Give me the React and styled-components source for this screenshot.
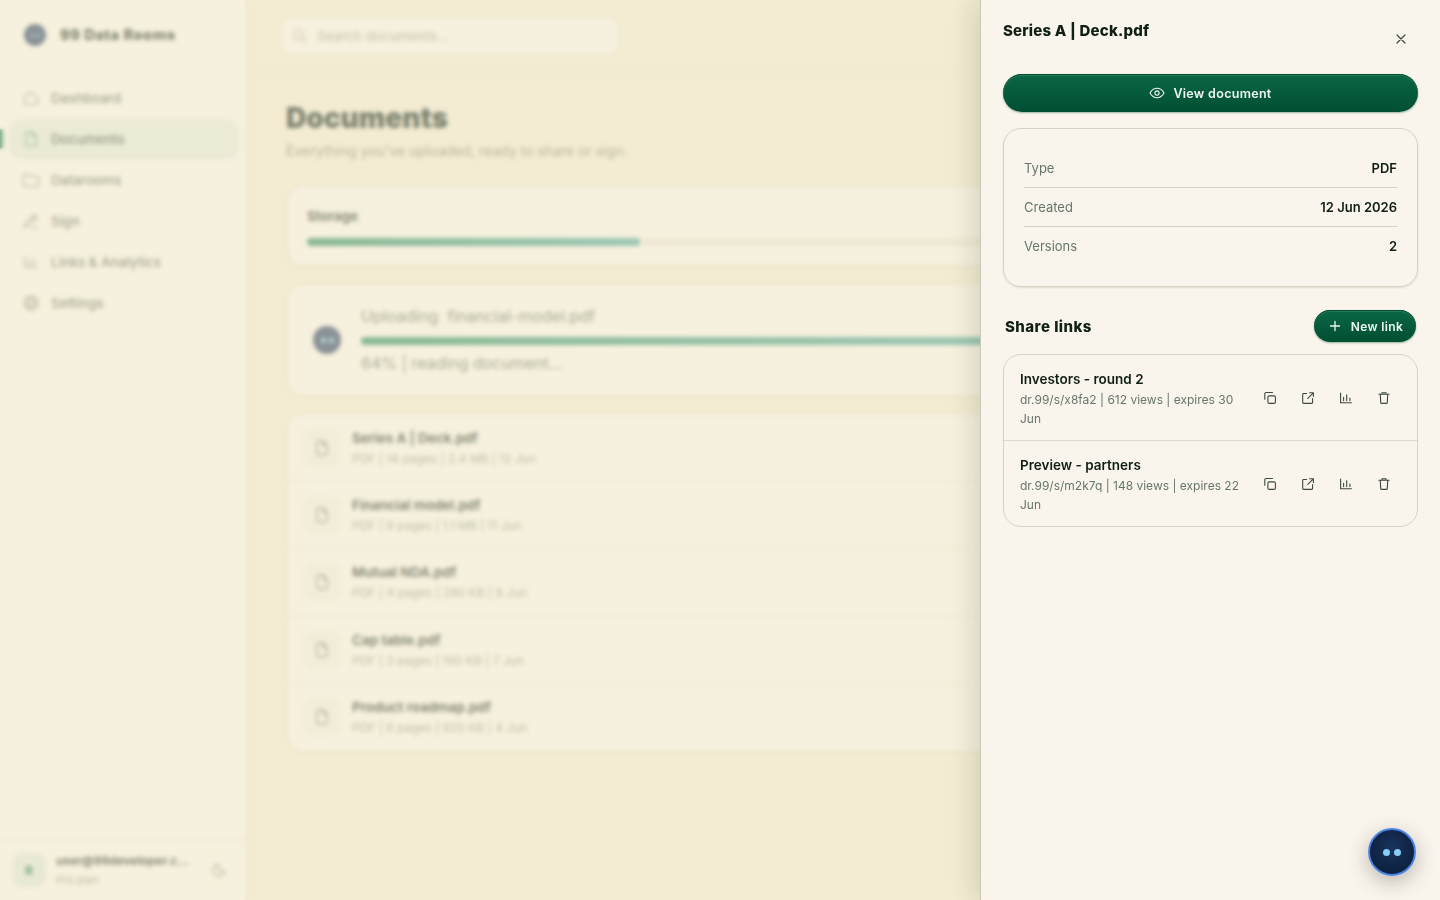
import React from "react";
import styled, { createGlobalStyle } from "styled-components";

const GlobalStyle = createGlobalStyle`
  * {
    box-sizing: border-box;
  }
  body {
    margin: 0;
    overflow: hidden;
    font-family: Inter, "Liberation Sans", sans-serif;
    color: #0f1f14;
    background: #f4ebd5;
  }
  h1, h2, h3, p {
    margin: 0;
  }
  button {
    font-family: inherit;
    border: none;
    background: none;
    padding: 0;
  }
`;

const icons = {
  home: <path d="M2.5 7.5 8 2.5l5.5 5v5a1.3 1.3 0 0 1-1.3 1.3H3.8a1.3 1.3 0 0 1-1.3-1.3z" />,
  file: <path d="M9 1.8H4.8a1.3 1.3 0 0 0-1.3 1.3v9.8a1.3 1.3 0 0 0 1.3 1.3h6.4a1.3 1.3 0 0 0 1.3-1.3V5.3zM9 1.8v3.5h3.5" />,
  folder: <path d="M1.2 12.6V3.9a1 1 0 0 1 1-1h3.2L7 4.9h6.8a1 1 0 0 1 1 1v6.7a1 1 0 0 1-1 1H2.2a1 1 0 0 1-1-1z" />,
  sign: <path d="m1.5 14 1.6-4 8.2-7.8 2.4 2.3L5.6 12.4zM9 4.3l2.4 2.3M8.5 14h5.5" />,
  chart: <path d="M2.6 3v9.7h10.8M5.6 7.3v3.3M8.7 4.8v5.8M11.9 8v2.6" />,
  settings: (
    <>
      <path d="M8 1.5 9.6 3l2.2-.2.5 2.1 2 1.1-.9 2 .9 2-2 1.1-.5 2.1-2.2-.2L8 14.5 6.4 13l-2.2.2-.5-2.1-2-1.1.9-2-.9-2 2-1.1.5-2.1 2.2.2z" />
      <circle cx="8" cy="8" r="4" />
      <circle cx="8" cy="8" r="1.5" />
    </>
  ),
  search: (
    <>
      <circle cx="7" cy="7" r="4.6" />
      <path d="m10.5 10.5 3.3 3.3" />
    </>
  ),
  moon: <path d="M13.5 9.3A5.8 5.8 0 0 1 6.7 2.5 5.8 5.8 0 1 0 13.5 9.3z" />,
  close: <path d="m4 4 8 8M12 4l-8 8" />,
  eye: (
    <>
      <path d="M1 8s2.6-4.7 7-4.7S15 8 15 8s-2.6 4.7-7 4.7S1 8 1 8z" />
      <circle cx="8" cy="8" r="2.1" />
    </>
  ),
  plus: <path d="M3.5 8h9M8 3.5v9" />,
  copy: (
    <>
      <rect x="5.9" y="5.9" width="7.5" height="7.5" rx="1.4" />
      <path d="M2.8 9.3V3.8a1.3 1.3 0 0 1 1.3-1.3h6.4" />
    </>
  ),
  external: <path d="M6.6 3.5H3.6a.9.9 0 0 0-.9.9v8.1a.9.9 0 0 0 .9.9h8.1a.9.9 0 0 0 .9-.9V8.6M7.8 8.4l5.5-5.6M9.6 2.7h3.8v3.8" />,
  trash: <path d="M2.9 4.3h10.2M6 4.3V2.7h4v1.6M4.3 4.3l.4 8.1a1 1 0 0 0 1 1h4.6a1 1 0 0 0 1-1l.4-8.1" />,
};

function Icon({ name, size = 16, stroke = 1.1 }) {
  return (
    <svg
      width={size}
      height={size}
      viewBox="0 0 16 16"
      fill="none"
      stroke="currentColor"
      strokeWidth={stroke}
      strokeLinecap="round"
      strokeLinejoin="round"
    >
      {icons[name]}
    </svg>
  );
}

const nav = [
  { icon: "home", label: "Dashboard" },
  { icon: "file", label: "Documents", active: true },
  { icon: "folder", label: "Datarooms" },
  { icon: "sign", label: "Sign" },
  { icon: "chart", label: "Links & Analytics" },
  { icon: "settings", label: "Settings" },
];

const documents = [
  { name: "Series A | Deck.pdf", meta: "PDF | 14 pages | 2.4 MB | 12 Jun" },
  { name: "Financial model.pdf", meta: "PDF | 8 pages | 1.1 MB | 11 Jun" },
  { name: "Mutual NDA.pdf", meta: "PDF | 4 pages | 280 KB | 9 Jun" },
  { name: "Cap table.pdf", meta: "PDF | 3 pages | 190 KB | 7 Jun" },
  { name: "Product roadmap.pdf", meta: "PDF | 6 pages | 920 KB | 4 Jun" },
];

const details = [
  ["Type", "PDF"],
  ["Created", "12 Jun 2026"],
  ["Versions", "2"],
];

const links = [
  { name: "Investors - round 2", meta: "dr.99/s/x8fa2 | 612 views | expires 30 Jun" },
  { name: "Preview - partners", meta: "dr.99/s/m2k7q | 148 views | expires 22 Jun" },
];

function Sidebar() {
  return (
    <SidebarWrap>
      <Brand>
        <Mascot $size={22}>
          <Eye $size={3} />
          <Eye $size={3} />
        </Mascot>
        <BrandName>99 Data Rooms</BrandName>
      </Brand>
      <Nav>
        {nav.map((item) => (
          <NavItem key={item.label} $active={item.active}>
            <Icon name={item.icon} size={18} stroke={1} />
            {item.label}
          </NavItem>
        ))}
      </Nav>
      <Account>
        <Avatar>R</Avatar>
        <AccountText>
          <AccountName>user@99developer.c...</AccountName>
          <AccountPlan>Pro plan</AccountPlan>
        </AccountText>
        <ThemeButton>
          <Icon name="moon" stroke={1.5} />
        </ThemeButton>
      </Account>
    </SidebarWrap>
  );
}

function Documents() {
  return (
    <Main>
      <Topbar>
        <Search>
          <Icon name="search" />
          Search documents...
        </Search>
      </Topbar>
      <Content>
        <Title>Documents</Title>
        <Subtitle>Everything you've uploaded, ready to share or sign.</Subtitle>
        <StorageCard>
          <StorageLabel>Storage</StorageLabel>
          <Track>
            <Fill style={{ width: "31%" }} />
          </Track>
        </StorageCard>
        <UploadCard>
          <Mascot $size={28}>
            <Eye $size={5} />
            <Eye $size={5} />
          </Mascot>
          <UploadBody>
            <p>Uploading&nbsp; financial-model.pdf</p>
            <Track>
              <Fill style={{ width: "64%" }} />
            </Track>
            <p>64% | reading document...</p>
          </UploadBody>
        </UploadCard>
        <DocList>
          {documents.map((doc) => (
            <DocRow key={doc.name}>
              <DocIcon>
                <Icon name="file" size={18} stroke={1.2} />
              </DocIcon>
              <div>
                <DocName>{doc.name}</DocName>
                <DocMeta>{doc.meta}</DocMeta>
              </div>
            </DocRow>
          ))}
        </DocList>
      </Content>
    </Main>
  );
}

function DetailsDrawer() {
  return (
    <Drawer>
      <DrawerHead>
        <DrawerTitle>Series A | Deck.pdf</DrawerTitle>
        <IconButton>
          <Icon name="close" stroke={1.2} />
        </IconButton>
      </DrawerHead>
      <ViewButton>
        <Icon name="eye" />
        View document
      </ViewButton>
      <InfoCard>
        {details.map(([label, value]) => (
          <InfoRow key={label}>
            <InfoLabel>{label}</InfoLabel>
            <InfoValue>{value}</InfoValue>
          </InfoRow>
        ))}
      </InfoCard>
      <LinksHead>
        <LinksTitle>Share links</LinksTitle>
        <NewButton>
          <Icon name="plus" stroke={1.3} />
          New link
        </NewButton>
      </LinksHead>
      <LinkList>
        {links.map((link) => (
          <LinkRow key={link.name}>
            <LinkText>
              <LinkName>{link.name}</LinkName>
              <LinkMeta>{link.meta}</LinkMeta>
            </LinkText>
            <LinkActions>
              {["copy", "external", "chart", "trash"].map((name) => (
                <IconButton key={name}>
                  <Icon name={name} />
                </IconButton>
              ))}
            </LinkActions>
          </LinkRow>
        ))}
      </LinkList>
    </Drawer>
  );
}

function App() {
  return (
    <>
      <GlobalStyle />
      <Shell>
        <Sidebar />
        <Documents />
      </Shell>
      <Overlay />
      <DetailsDrawer />
      <Helper>
        <Eye $size={7.5} />
        <Eye $size={7.5} />
      </Helper>
    </>
  );
}

const Shell = styled.div`
  display: flex;
  height: 100vh;
`;

const SidebarWrap = styled.aside`
  display: flex;
  flex-direction: column;
  width: 247px;
  flex-shrink: 0;
  background: #faf5ec;
  border-right: 1px solid #dddac8;
`;

const Brand = styled.div`
  display: flex;
  align-items: center;
  gap: 14px;
  height: 70px;
  padding-left: 24px;
`;

const Mascot = styled.div`
  display: flex;
  align-items: center;
  justify-content: center;
  gap: 3px;
  flex-shrink: 0;
  width: ${({ $size }) => $size}px;
  height: ${({ $size }) => $size}px;
  border-radius: 50%;
  background: #22395c;
`;

const Eye = styled.span`
  width: ${({ $size }) => $size}px;
  height: ${({ $size }) => $size}px;
  border-radius: 50%;
  background: #86cdf3;
`;

const BrandName = styled.span`
  padding-bottom: 1px;
  font-size: 14.5px;
  font-weight: 800;
  letter-spacing: 0.6px;
`;

const Nav = styled.nav`
  display: flex;
  flex-direction: column;
  flex: 1;
  gap: 1px;
  padding: 7.5px 8px 0 9px;
`;

const NavItem = styled.div`
  position: relative;
  display: flex;
  align-items: center;
  gap: 11px;
  height: 40px;
  padding-left: 13px;
  border-radius: 12px;
  font-size: 13.5px;
  font-weight: 500;
  color: ${({ $active }) => ($active ? "#3f5143" : "#5f6a59")};
  background: ${({ $active }) => ($active ? "#e3e8db" : "transparent")};

  svg {
    color: ${({ $active }) => ($active ? "#3d8360" : "#78816e")};
  }

  &::before {
    content: "";
    display: ${({ $active }) => ($active ? "block" : "none")};
    position: absolute;
    left: -9px;
    top: 10px;
    width: 3px;
    height: 20px;
    border-radius: 0 3px 3px 0;
    background: #0a7148;
  }
`;

const Account = styled.div`
  display: flex;
  align-items: center;
  gap: 10px;
  height: 61px;
  padding: 0 9px 0 12px;
  border-top: 1px solid #e6e1d1;
`;

const Avatar = styled.div`
  display: grid;
  place-items: center;
  width: 34px;
  height: 34px;
  border-radius: 10px;
  background: #dfe7d9;
  color: #1d7650;
  font-size: 12px;
  font-weight: 800;
`;

const AccountText = styled.div`
  width: 134px;
`;

const AccountName = styled.div`
  white-space: nowrap;
  font-size: 12px;
  line-height: 20px;
  font-weight: 600;
`;

const AccountPlan = styled.div`
  font-size: 11px;
  line-height: 18px;
  color: #8d947f;
`;

const ThemeButton = styled.button`
  display: grid;
  place-items: center;
  width: 36px;
  height: 36px;
  margin-left: 1px;
  border-radius: 12px;
  border: 1px solid #efeadb;
  color: #858d7a;
`;

const Main = styled.main`
  flex: 1;
`;

const Topbar = styled.header`
  display: flex;
  align-items: center;
  height: 73px;
  padding-left: 34px;
  border-bottom: 1px solid #e8e0c9;
`;

const Search = styled.div`
  display: flex;
  align-items: center;
  gap: 9px;
  width: 338px;
  height: 38px;
  padding-left: 10px;
  border: 1px solid #e8e1cd;
  border-radius: 12px;
  background: #faf5ec;
  color: #969c89;
  font-size: 13.5px;
`;

const Content = styled.div`
  padding: 26px 40px 0;
`;

const Title = styled.h1`
  margin-left: -1px;
  font-size: 28px;
  line-height: 38px;
  font-weight: 900;
`;

const Subtitle = styled.p`
  margin-top: 4px;
  margin-left: -1px;
  font-size: 14px;
  line-height: 20px;
  color: #7d8571;
`;

const Card = styled.section`
  border: 1px solid #ebe4d1;
  border-radius: 16px;
  background: #faf5ec;
  box-shadow: 0 1px 3px rgba(60, 60, 20, 0.08);
`;

const StorageCard = styled(Card)`
  height: 80px;
  margin-top: 25px;
  padding: 19px 19px 0;
`;

const StorageLabel = styled.div`
  margin-bottom: 12px;
  font-size: 13.5px;
  line-height: 20px;
  font-weight: 600;
`;

const Track = styled.div`
  height: 8px;
  border-radius: 4px;
  background: #ebe7da;
`;

const Fill = styled.div`
  height: 100%;
  border-radius: 4px;
  background: linear-gradient(90deg, #22865a, #4aa397);
`;

const UploadCard = styled(Card)`
  display: flex;
  align-items: center;
  gap: 20px;
  height: 112px;
  margin-top: 18px;
  padding: 0 19px 0 25px;
`;

const UploadBody = styled.div`
  flex: 1;
  padding-bottom: 2px;
  font-size: 16px;
  line-height: 26px;
  color: #667060;

  ${Track} {
    margin: 8px 0 5px;
  }
`;

const DocList = styled(Card)`
  margin-top: 18px;
`;

const DocRow = styled.div`
  display: flex;
  align-items: center;
  gap: 11px;
  height: 67.5px;
  padding-left: 15px;

  &:first-child {
    height: 65.5px;
  }

  & + & {
    border-top: 1px solid #e9e4d5;
  }
`;

const DocIcon = styled.div`
  display: grid;
  place-items: center;
  width: 38px;
  height: 38px;
  border-radius: 10px;
  background: #f3eee1;
  color: #7a836f;
`;

const DocName = styled.div`
  padding-top: 1px;
  font-size: 13.5px;
  line-height: 21px;
  font-weight: 600;
`;

const DocMeta = styled.div`
  font-size: 12px;
  line-height: 20px;
  color: #8f9681;
`;

const Overlay = styled.div`
  position: fixed;
  inset: 0;
  background: rgba(242, 235, 208, 0.5);
  backdrop-filter: blur(2px);
`;

const Drawer = styled.aside`
  position: fixed;
  top: 0;
  right: 0;
  bottom: 0;
  width: 460px;
  padding: 20px 22px;
  border-left: 1px solid #c9c9b5;
  background: #faf5ec;
  box-shadow: -5px 0 26px rgba(30, 55, 30, 0.16);
`;

const DrawerHead = styled.div`
  display: flex;
  justify-content: space-between;
  height: 54px;

  button {
    margin-top: 2px;
  }
`;

const DrawerTitle = styled.h2`
  font-size: 15px;
  line-height: 21px;
  font-weight: 800;
  letter-spacing: 0.2px;
`;

const IconButton = styled.button`
  display: grid;
  place-items: center;
  width: 34px;
  height: 34px;
  color: #3c4a3d;
`;

const PrimaryButton = styled.button`
  display: flex;
  align-items: center;
  justify-content: center;
  color: #eef8ee;
  font-weight: 600;
  border-radius: 20px;
  background: linear-gradient(#0a6745, #014f32);
  box-shadow: 0 1px 2px rgba(0, 80, 50, 0.4), inset 0 1px 0 #004d30, inset 0 2px 0 rgba(255, 255, 255, 0.12);
`;

const ViewButton = styled(PrimaryButton)`
  gap: 8px;
  width: 100%;
  height: 38px;
  font-size: 12.5px;
  letter-spacing: 0.3px;
`;

const NewButton = styled(PrimaryButton)`
  gap: 8px;
  width: 102px;
  height: 32px;
  font-size: 12px;
  letter-spacing: 0.35px;
`;

const InfoCard = styled.section`
  height: 158.5px;
  margin-top: 16px;
  padding: 20px;
  border: 1px solid #d5d3c2;
  border-radius: 18px;
  box-shadow: 0 1px 2px rgba(60, 70, 40, 0.14);
`;

const InfoRow = styled.div`
  display: flex;
  align-items: center;
  justify-content: space-between;
  height: 39px;
  font-size: 13px;

  &:not(:last-child) {
    border-bottom: 1px solid #d3d3c4;
  }

  &:last-child {
    height: 38px;
  }
`;

const InfoLabel = styled.span`
  color: #66776a;
`;

const InfoValue = styled.span`
  font-weight: 600;
`;

const LinksHead = styled.div`
  display: flex;
  align-items: center;
  justify-content: space-between;
  margin: 23.5px 2px 12px;
  height: 32px;
`;

const LinksTitle = styled.h3`
  font-size: 15px;
  font-weight: 800;
  letter-spacing: 0.45px;
`;

const LinkList = styled.section`
  border: 1px solid #d5d3c2;
  border-radius: 18px;
`;

const LinkRow = styled.div`
  display: flex;
  align-items: center;
  gap: 12px;
  height: 85px;
  padding: 0 16px;

  & + & {
    height: 86px;
    border-top: 1px solid #dbd9ca;
  }
`;

const LinkText = styled.div`
  flex: 1;
  padding-top: 2px;
`;

const LinkName = styled.div`
  font-size: 13.5px;
  line-height: 21px;
  font-weight: 600;
`;

const LinkMeta = styled.div`
  font-size: 12px;
  line-height: 19.2px;
  color: #66776a;
`;

const LinkActions = styled.div`
  display: flex;
  gap: 4px;
`;

const Helper = styled.button`
  position: fixed;
  right: 24px;
  bottom: 24px;
  display: flex;
  align-items: center;
  justify-content: center;
  gap: 3.5px;
  width: 48px;
  height: 48px;
  padding-top: 1px;
  border: 2px solid #4b83e6;
  border-radius: 50%;
  background: radial-gradient(circle at 50% 40%, #18335d, #0a1a33);
  box-shadow: 0 6px 20px rgba(40, 40, 30, 0.3);
`;

export default App;
